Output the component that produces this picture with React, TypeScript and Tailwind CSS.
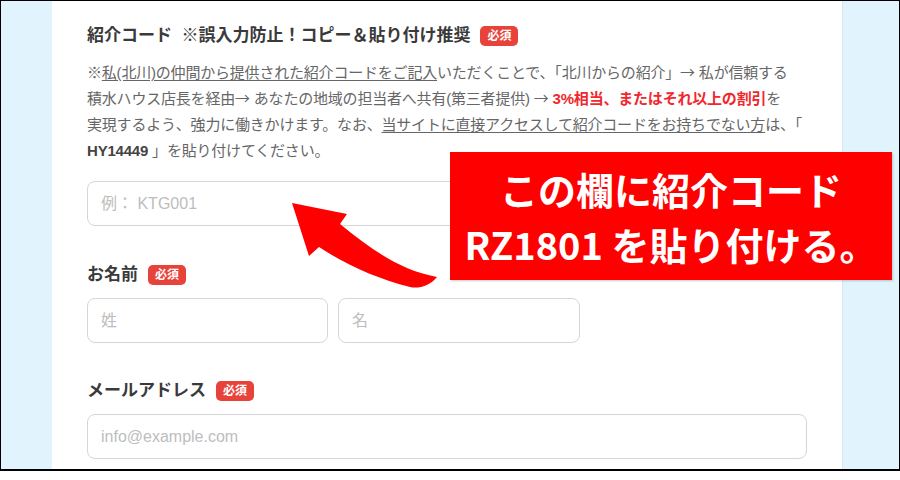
import React from "react";

const font = { fontFamily: '"Liberation Sans", "Noto Sans CJK JP", sans-serif' };
const cjk = { fontFamily: '"Noto Sans CJK JP", sans-serif' };

const Badge = () => (
  <span className="inline-flex items-center justify-center h-[20px] px-[7px] rounded-[5px] bg-[#e8433a] text-white text-[12px] font-bold leading-none">
    必須
  </span>
);

const Label = ({ text }: { text: string }) => (
  <div className="flex items-center gap-[10px] h-6">
    <span className="text-[17px] font-semibold text-[#3a3a3a] leading-6 whitespace-pre">{text}</span>
    <Badge />
  </div>
);

const Arrow = () => (
  <span className="leading-none" style={cjk}>
    →
  </span>
);

const Field = ({ placeholder, className = "" }: { placeholder: string; className?: string }) => (
  <input
    readOnly
    placeholder={placeholder}
    className={`h-[45px] rounded-[8px] border border-[#d6d6d6] bg-white px-[13px] text-[16px] outline-none placeholder:text-[#bdbdbd] ${className}`}
    style={font}
  />
);

export default function App() {
  return (
    <div className="relative w-[900px] h-[480px] bg-white overflow-hidden" style={font}>
      <div className="flex h-[471px] border border-b-2 border-black overflow-hidden">
        <div className="w-[51px] bg-[#e1f4fd]" />
        <div className="w-[790px] bg-white px-[35px] pt-[23px]">
          <Label text="紹介コード  ※誤入力防止！コピー＆貼り付け推奨" />

          <p className="mt-[12px] text-[15px] leading-[26px] text-[#666] whitespace-nowrap tracking-[-0.2px]">
            ※<span className="underline underline-offset-2">私(北川)の仲間から提供された紹介コードをご記入</span>
            いただくことで、「北川からの紹介」<Arrow /> 私が信頼する
            <br />
            積水ハウス店長を経由<Arrow /> あなたの地域の担当者へ共有(第三者提供) <Arrow />{" "}
            <span className="font-bold text-[#f0282d]">3%相当、またはそれ以上の割引</span>を
            <br />
            実現するよう、強力に働きかけます。なお、
            <span className="underline underline-offset-2">当サイトに直接アクセスして紹介コードをお持ちでない方</span>
            は、「
            <br />
            <span className="font-bold text-[#444]">HY14449</span> 」を貼り付けてください。
          </p>

          <Field placeholder="例： KTG001" className="mt-[17px] w-full block" />

          <div className="mt-[37px]">
            <Label text="お名前" />
          </div>
          <div className="mt-[11px] flex gap-[10px]">
            <Field placeholder="姓" className="w-[241px]" />
            <Field placeholder="名" className="w-[242px]" />
          </div>

          <div className="mt-[36px]">
            <Label text="メールアドレス" />
          </div>
          <Field placeholder="info@example.com" className="mt-[11px] w-full block" />
          <Field placeholder="" className="mt-[10px] w-full block" />
        </div>
        <div className="flex-1 bg-[#e1f4fd] border-l border-[#d2e8f2]" />
      </div>

      <svg className="absolute inset-0 pointer-events-none" width="900" height="480" viewBox="0 0 900 480">
        <path
          d="M292 203 L347 214 L340 224 C372 250 400 270 437 277 C430 286 418 289 410 287 C378 279 346 265 319 247 L309 256 Z"
          fill="#ff0000"
        />
      </svg>

      <div
        className="absolute left-[450px] top-[152px] w-[442px] h-[128px] bg-[#ff0000] flex flex-col items-center justify-center text-white text-[38px] font-bold leading-[55px] shadow-[1px_1px_2px_rgba(0,0,0,0.2)]"
        style={{ fontFamily: '"Noto Sans CJK JP", "Noto Sans", sans-serif' }}
      >
        <div>この欄に紹介コード</div>
        <div>RZ1801 を貼り付ける。</div>
      </div>
    </div>
  );
}
